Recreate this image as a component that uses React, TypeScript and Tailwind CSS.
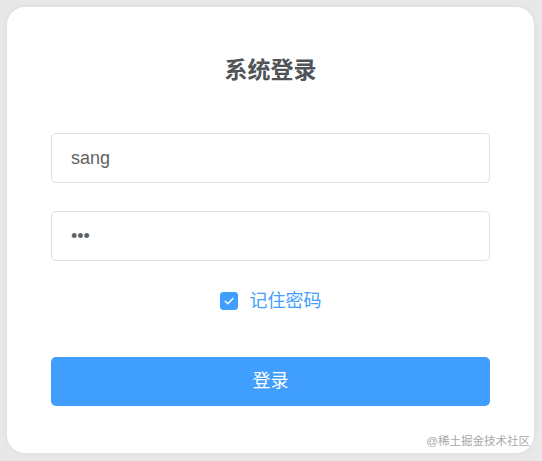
import { useState } from "react";

export default function App() {
  const [user, setUser] = useState("sang");
  const [pwd, setPwd] = useState("123");
  const [remember, setRemember] = useState(true);

  return (
    <div
      className="relative h-[461px] w-[542px] overflow-hidden bg-[#e8e8e8] pt-[7px] pl-[7px]"
      style={{ fontFamily: '"Liberation Sans", "Noto Sans CJK SC", sans-serif' }}
    >
      <div className="h-[446px] w-[527px] rounded-[18px] bg-white px-[44px] pt-[47px] shadow-[0_0_6px_rgba(0,0,0,0.06)]">
        <h3 className="text-center text-[23px] leading-[32px] font-bold text-[#505458]">系统登录</h3>

        <input
          value={user}
          onChange={(e) => setUser(e.target.value)}
          className="mt-[47px] block h-[50px] w-full rounded-[5px] border border-[#dcdfe6] px-[19px] text-[18px] text-[#606266] outline-none"
        />
        <input
          type="password"
          value={pwd}
          onChange={(e) => setPwd(e.target.value)}
          className="mt-[28px] block h-[50px] w-full rounded-[5px] border border-[#dcdfe6] px-[19px] text-[18px] text-[#606266] outline-none"
        />

        <label className="mt-[28px] flex h-[24px] cursor-pointer items-center justify-center gap-[12px]">
          <span
            onClick={() => setRemember(!remember)}
            className={`flex h-[18px] w-[18px] items-center justify-center rounded-[3px] border ${
              remember ? "border-[#409eff] bg-[#409eff]" : "border-[#dcdfe6] bg-white"
            }`}
          >
            {remember && (
              <svg width="12" height="12" viewBox="0 0 12 12" fill="none">
                <path d="M2.2 6.2 L4.9 8.7 L9.9 3.4" stroke="white" strokeWidth="1.4" strokeLinecap="round" strokeLinejoin="round" />
              </svg>
            )}
          </span>
          <span className="text-[18px] text-[#409eff]">记住密码</span>
        </label>

        <button className="mt-[44px] block h-[49px] w-full rounded-[5px] bg-[#409eff] text-[18px] text-white">
          登录
        </button>
      </div>

      <div className="absolute right-[12px] bottom-[13px] text-[11.5px] leading-[14px] text-[#a8a8a8]">
        @稀土掘金技术社区
      </div>
    </div>
  );
}
